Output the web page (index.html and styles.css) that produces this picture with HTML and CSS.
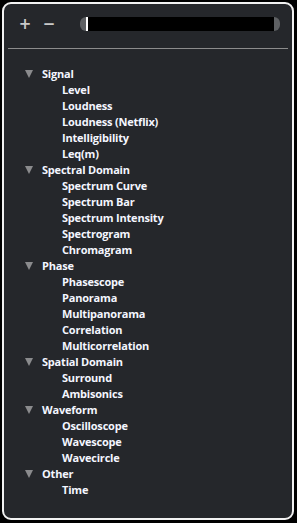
FILE: index.html
```html
<!DOCTYPE html>
<html>
<head>
<meta charset="utf-8">
<link rel="stylesheet" href="styles.css">
</head>
<body>
<div class="panel">
  <div class="toolbar">
    <span class="tbtn plus">+</span>
    <span class="tbtn minus">&#8722;</span>
    <div class="slider">
      <span class="cap left"></span>
      <div class="track"><span class="cursor"></span></div>
      <span class="cap right"></span>
    </div>
  </div>
  <div class="sep"></div>
  <ul class="tree">
    <li class="cat"><span class="tri"></span>Signal</li>
    <li class="item">Level</li>
    <li class="item">Loudness</li>
    <li class="item">Loudness (Netflix)</li>
    <li class="item">Intelligibility</li>
    <li class="item">Leq(m)</li>
    <li class="cat"><span class="tri"></span>Spectral Domain</li>
    <li class="item">Spectrum Curve</li>
    <li class="item">Spectrum Bar</li>
    <li class="item">Spectrum Intensity</li>
    <li class="item">Spectrogram</li>
    <li class="item">Chromagram</li>
    <li class="cat"><span class="tri"></span>Phase</li>
    <li class="item">Phasescope</li>
    <li class="item">Panorama</li>
    <li class="item">Multipanorama</li>
    <li class="item">Correlation</li>
    <li class="item">Multicorrelation</li>
    <li class="cat"><span class="tri"></span>Spatial Domain</li>
    <li class="item">Surround</li>
    <li class="item">Ambisonics</li>
    <li class="cat"><span class="tri"></span>Waveform</li>
    <li class="item">Oscilloscope</li>
    <li class="item">Wavescope</li>
    <li class="item">Wavecircle</li>
    <li class="cat"><span class="tri"></span>Other</li>
    <li class="item">Time</li>
  </ul>
</div>
</body>
</html>
```
FILE: styles.css
```css
html, body {
  margin: 0;
  padding: 0;
  background: #000;
  width: 297px;
  height: 523px;
  overflow: hidden;
}
.panel {
  box-sizing: border-box;
  margin: 2px 0 0 2px;
  width: 292px;
  height: 518px;
  border: 2px solid #f2f2f2;
  border-radius: 9px;
  background: #25272b;
  font-family: "Open Sans", "DejaVu Sans", sans-serif;
  font-weight: 700;
  font-size: 11px;
  letter-spacing: -0.2px;
  color: #f4f6ff;
}
.toolbar {
  display: flex;
  align-items: center;
  height: 40px;
  padding: 0 0 0 9px;
}
.tbtn {
  color: #c9c9c9;
  font-family: "DejaVu Sans", sans-serif;
  font-size: 15px;
  font-weight: 700;
  width: 24px;
  text-align: center;
  line-height: 16px;
  letter-spacing: 0;
}
.minus { margin-right: 19px; }
.slider {
  display: flex;
  align-items: center;
  height: 14px;
}
.cap {
  width: 6px;
  height: 14px;
  background: #5e6063;
}
.cap.left { border-radius: 7px 0 0 7px; }
.cap.right { border-radius: 0 7px 7px 0; }
.track {
  position: relative;
  width: 188px;
  height: 14px;
  background: #000;
}
.cursor {
  position: absolute;
  left: 0;
  top: 0;
  width: 2px;
  height: 14px;
  background: #fff;
}
.sep {
  height: 1px;
  margin: 4px 4px 0 4px;
  background: #8c8c8c;
}
.tree {
  list-style: none;
  margin: 17px 0 0 0;
  padding: 0;
}
.tree li {
  height: 16px;
  line-height: 16px;
  white-space: nowrap;
}
.cat {
  display: flex;
  align-items: center;
  padding-left: 21px;
}
.item {
  padding-left: 58px;
}
.tri {
  width: 0;
  height: 0;
  border-left: 4px solid transparent;
  border-right: 4px solid transparent;
  border-top: 8px solid #8a8b8d;
  margin-right: 9px;
}
```
